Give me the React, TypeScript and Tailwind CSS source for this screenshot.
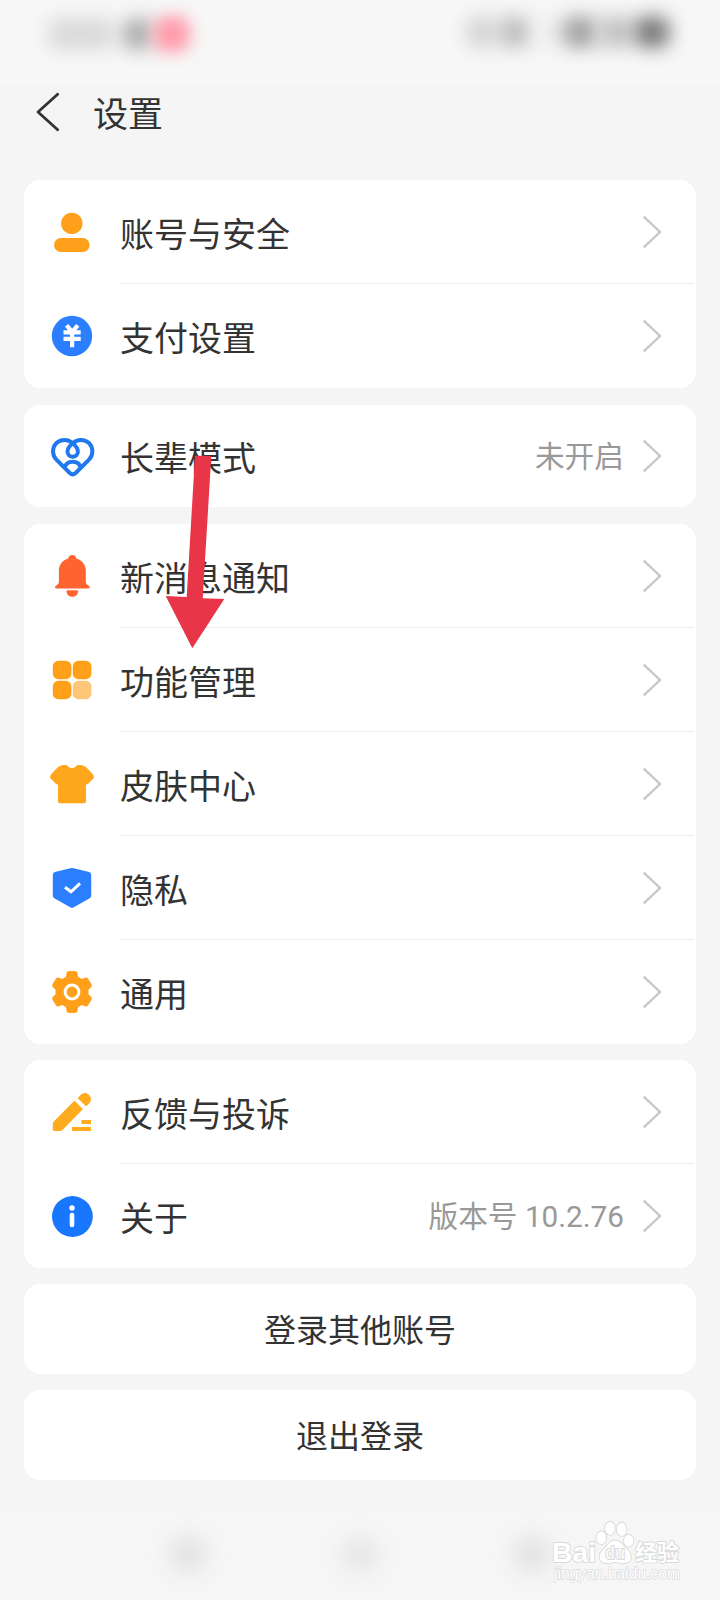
import React from "react"

interface Item {
    label: string
    icon: React.ReactNode
    value?: string
}

const PersonIcon = () => (
    <svg viewBox="0 0 48 48" className="size-12 shrink-0" fill="#ff9f1a">
        <circle cx="23.8" cy="15.4" r="10.7" />
        <rect x="6" y="30" width="35.6" height="14" rx="7" />
    </svg>
)

const PayIcon = () => (
    <svg viewBox="0 0 48 48" className="size-12 shrink-0">
        <circle cx="24" cy="24" r="20.2" fill="#2b7fff" />
        <path d="M18.6 13.4l5.600 6.500l5.600-6.500M15.500 20.300h17.200M15.500 26.800h17.200M24.100 20v15.200" fill="none" stroke="#fff" strokeWidth="4.2" />
    </svg>
)

const HeartIcon = () => (
    <svg viewBox="0 0 48 48" className="size-12 shrink-0" fill="none" stroke="#1f78ee" strokeWidth="4" strokeLinejoin="round">
        <path d="M24.7 11.2C20.500 7.200 12.800 6.600 8.300 11.200C3.900 15.900 4 23 8.400 27.600L21.800 41Q24.700 43.600 27.600 41L41 27.600C45.400 23 45.500 15.900 41.100 11.200C36.600 6.600 28.900 7.200 24.700 11.200Z" />
        <path d="M24.700 11.200C22.200 13.300 19.500 16.800 19.500 19.600A5.200 5.200 0 0 0 29.900 19.600C29.900 16.800 27.200 13.300 24.700 11.200Z" />
        <path d="M16.600 35.400C19 27.800 30.400 27.800 32.800 35.400" />
    </svg>
)

const BellIcon = () => (
    <svg viewBox="0 0 48 48" className="size-12 shrink-0" fill="#ff6430">
        <path d="M24.3 3C22 3 20.5 4.500 20.300 6.400C14.500 8 10.900 12.700 10.900 18.500V30.500Q10.500 32.500 8.200 33.600Q6.700 34.500 7 35.500Q7.200 36.400 8.500 36.400H40.200Q41.500 36.400 41.700 35.500Q42 34.500 40.500 33.600Q38.200 32.500 37.800 30.500V18.500C37.800 12.700 34.100 8 28.300 6.400C28.100 4.500 26.600 3 24.300 3Z" />
        <path d="M18.500 39.200Q18.700 38.300 19.800 38.300H28.800Q29.900 38.300 30.100 39.200C29.600 46.700 19 46.700 18.500 39.200Z" />
    </svg>
)

const GridIcon = () => (
    <svg viewBox="0 0 48 48" className="size-12 shrink-0" fill="#ff9f1a">
        <rect x="4.800" y="4.800" width="18.600" height="18.400" rx="5.500" />
        <rect x="24.800" y="4.800" width="18.600" height="18.400" rx="5.500" />
        <rect x="4.800" y="24.800" width="18.600" height="18.400" rx="5.500" />
        <rect x="24.800" y="24.800" width="18.600" height="18.400" rx="5.500" fill="#fdc679" />
    </svg>
)

const ShirtIcon = () => (
    <svg viewBox="0 0 48 48" className="size-12 shrink-0" fill="#ffa71c">
        <path d="M15.500 5H17.500Q19 5 20.200 6.400Q24 10 27.800 6.400Q29 5 30.500 5H32.500Q36 5.100 38.500 7.500Q43 12 45.500 15.300Q46.600 17 45.400 18.400L40.500 23.600Q39.500 24.500 38 24.600V41.600Q38 43.200 36.400 43.200H11.600Q10 43.200 10 41.600V24.600Q8.500 24.500 7.500 23.600L2.600 18.400Q1.400 17 2.500 15.300Q5 12 9.500 7.500Q12 5.100 15.500 5Z" />
    </svg>
)

const ShieldIcon = () => (
    <svg viewBox="0 0 48 48" className="size-12 shrink-0">
        <path d="M22.400 4.300Q24 3.800 25.600 4.300L41.200 8Q43.200 8.600 43.200 10.800V31.500Q43.200 33.300 41.700 34.300L25.800 43.300Q24 44.300 22.200 43.300L6.300 34.300Q4.800 33.300 4.800 31.500V10.800Q4.800 8.600 6.800 8Z" fill="#2b7fff" />
        <path d="M17 23.200L23 27.800L32 19.400" fill="none" stroke="#fff" strokeWidth="3" />
    </svg>
)

const GearIcon = () => (
    <svg viewBox="0 0 48 48" className="size-12 shrink-0">
        <path d="M18.500 5.200Q18.800 3 21 3H27Q29.200 3 29.500 5.200L30 8.800L33.700 11L37 9.700Q39 9 40.100 10.700L43.500 16.200Q44.500 18 42.900 19.400L40.500 21.500V26.500L42.900 28.600Q44.500 30 43.500 31.800L40.100 37.300Q39 39 37 38.300L33.700 37L30 39.200L29.500 42.800Q29.200 45 27 45H21Q18.800 45 18.500 42.800L18 39.200L14.300 37L11 38.300Q9 39 7.900 37.300L4.500 31.800Q3.500 30 5.100 28.600L7.500 26.500V21.500L5.100 19.400Q3.500 18 4.500 16.200L7.900 10.700Q9 9 11 9.700L14.300 11L18 8.800Z" fill="#ff9f1a" />
        <circle cx="24" cy="24" r="6.900" fill="none" stroke="#fff" strokeWidth="3" />
    </svg>
)

const PencilIcon = () => (
    <svg viewBox="0 0 48 48" className="size-12 shrink-0" fill="#ffab1f">
        <path d="M26.900 13L35 21.100L14.500 42Q13.500 43 12 43H6.200Q4.800 43 4.800 41.600V35.600Q4.800 34.400 5.800 33.400L25.600 13.400Q26.300 12.500 26.900 13Z" />
        <path d="M29.700 10.200C33.500 4.500 37.500 3.600 40.600 6.500C44.300 9.900 44 14.500 37.900 18.300Z" />
        <rect x="33.400" y="32" width="9.600" height="4" />
        <rect x="24" y="39" width="19" height="4" />
    </svg>
)

const InfoIcon = () => (
    <svg viewBox="0 0 48 48" className="size-12 shrink-0">
        <circle cx="24.400" cy="24.500" r="20.400" fill="#1977fe" />
        <circle cx="24" cy="15.900" r="2.700" fill="#fff" />
        <path d="M24 23V33" stroke="#fff" strokeWidth="4.600" strokeLinecap="round" />
    </svg>
)

const groups: { className: string, items: Item[] }[] = [
    {
        className: "h-[208px]",
        items: [
            { label: "账号与安全", icon: <PersonIcon /> },
            { label: "支付设置", icon: <PayIcon /> },
        ],
    },
    {
        className: "mt-[17px] h-[102px]",
        items: [{ label: "长辈模式", icon: <HeartIcon />, value: "未开启" }],
    },
    {
        className: "mt-[17px] h-[520px]",
        items: [
            { label: "新消息通知", icon: <BellIcon /> },
            { label: "功能管理", icon: <GridIcon /> },
            { label: "皮肤中心", icon: <ShirtIcon /> },
            { label: "隐私", icon: <ShieldIcon /> },
            { label: "通用", icon: <GearIcon /> },
        ],
    },
    {
        className: "mt-4 h-[208px]",
        items: [
            { label: "反馈与投诉", icon: <PencilIcon /> },
            { label: "关于", icon: <InfoIcon />, value: "版本号 10.2.76" },
        ],
    },
]

const Row = ({ item, last }: { item: Item, last: boolean }) => (
    <div className="flex flex-1 items-center pl-6 pr-0.5">
        {item.icon}
        <div className={`ml-6 flex flex-1 items-center self-stretch border-b pr-8 ${last ? "border-transparent" : "border-[#eeeeee]"}`}>
            <span className="pt-1.5 text-[34px] leading-10">{item.label}</span>
            {item.value && <span className="ml-auto pt-[3px] text-[29.700px] leading-10 text-[#999999]">{item.value}</span>}
            <svg viewBox="0 0 20 34" className={`h-[34px] w-5 shrink-0 ${item.value ? "ml-[18px]" : "ml-auto"}`} fill="none" stroke="#c8c8c8" strokeWidth="2.400">
                <path d="M1.700 1.700L18 17L1.700 32.300" />
            </svg>
        </div>
    </div>
)

const StatusBar = () => (
    <div className="flex h-[86px] items-start justify-between bg-[#f7f7f7] pl-[48px] pr-[50px] pt-[16px]">
        <div className="flex items-center">
            <span className="h-8 w-[66px] rounded-xl bg-[#dadada] blur-[9px]" />
            <span className="ml-2 h-8 w-8 rounded-xl bg-[#b0b0b0] blur-[9px]" />
            <span className="h-9 w-9 rounded-xl bg-[#ff9cac] blur-[8px]" />
        </div>
        <div className="flex items-center">
            <span className="h-8 w-8 rounded-xl bg-[#d6d6d6] blur-[9px]" />
            <span className="h-8 w-8 rounded-xl bg-[#c0c0c0] blur-[9px]" />
            <span className="ml-2 h-7 w-6 rounded-xl bg-[#ececec] blur-[9px]" />
            <span className="h-8 w-9 rounded-xl bg-[#a6a6a6] blur-[9px]" />
            <span className="h-8 w-9 rounded-xl bg-[#c4c4c4] blur-[9px]" />
            <span className="h-8 w-9 rounded-xl bg-[#7e7e7e] blur-[9px]" />
        </div>
    </div>
)

const Watermark = () => (
    <svg viewBox="0 0 140 72" className="absolute bottom-[12px] right-[32px] h-[72px] w-[140px] overflow-visible" fill="#fff" stroke="#d9d9d9" strokeWidth="1.800" paintOrder="stroke" strokeLinejoin="round">
        <text x="4" y="46" fontSize="28" fontWeight="700" fontFamily="Liberation Sans" textLength="44" lengthAdjust="spacingAndGlyphs">Bai</text>
        <ellipse cx="53.300" cy="21.700" rx="5" ry="6.300" />
        <ellipse cx="62" cy="12.300" rx="4.800" ry="6.600" />
        <ellipse cx="73.700" cy="13.300" rx="4.800" ry="6.600" />
        <ellipse cx="80.700" cy="24.700" rx="4.800" ry="6" />
        <path d="M67 24.500C61 24.500 60 30 55.500 33.500C50 38 50 46.500 58 47C63 47.300 64 46 67 46C70 46 72 47.300 77 47C84.500 46.500 84.500 38 79 33.500C74.500 30 73 24.500 67 24.500Z" />
        <text x="57" y="43" fontSize="18" fontWeight="700" fontFamily="Liberation Sans" textLength="20" lengthAdjust="spacingAndGlyphs" fill="#f6f6f6">du</text>
        <text x="87" y="44" fontSize="22" fontWeight="700" fontFamily="Noto Sans CJK SC">经验</text>
        <text x="6" y="63" fontSize="16" fontFamily="Liberation Sans" textLength="126" lengthAdjust="spacingAndGlyphs" strokeWidth="1.300">jingyan.baidu.com</text>
    </svg>
)

export default function App() {
    return (
        <div className="relative flex h-[1600px] w-[720px] flex-col overflow-hidden bg-[#f5f5f5] font-[Roboto,'Noto_Sans_CJK_SC',sans-serif] text-[#333333]">
            <StatusBar />
            <header className="flex h-[94px] items-start pl-[35px] pt-[6px]">
                <svg viewBox="0 0 26 40" className="h-10 w-[26px]" fill="none" stroke="#333333" strokeWidth="2.800" strokeLinejoin="round">
                    <path d="M23.500 1.500L3 20L23.500 38.500" />
                </svg>
                <h1 className="ml-8 pt-0.5 text-[35px] leading-[44px]">设置</h1>
            </header>
            <main className="flex flex-col px-6">
                {groups.map((group, index) => (
                    <section key={index} className={`flex flex-col rounded-2xl bg-white ${group.className}`}>
                        {group.items.map((item, i) => (
                            <Row key={item.label} item={item} last={i === group.items.length - 1} />
                        ))}
                    </section>
                ))}
                <button className="mt-4 h-[90px] rounded-2xl bg-white pt-1 text-[32px]">登录其他账号</button>
                <button className="mt-4 h-[90px] rounded-2xl bg-white pt-1 text-[32px]">退出登录</button>
            </main>
            <footer className="mt-[28px] flex flex-1 items-center justify-center gap-[136px] bg-[#f6f6f6]">
                <span className="h-9 w-9 rounded-full bg-[#e2e2e2] blur-[10px]" />
                <span className="h-9 w-9 rounded-full bg-[#e6e6e6] blur-[10px]" />
                <span className="h-9 w-9 rounded-full bg-[#e2e2e2] blur-[10px]" />
            </footer>
            <svg viewBox="0 0 60 194" className="absolute left-[165px] top-[455px] h-[194px] w-[60px]" fill="#e93548">
                <path d="M30 0.700L46.300 1L37.700 143.300L59.300 144L27.300 193.300L0.700 141L21.700 142Z" />
            </svg>
            <Watermark />
        </div>
    )
}
